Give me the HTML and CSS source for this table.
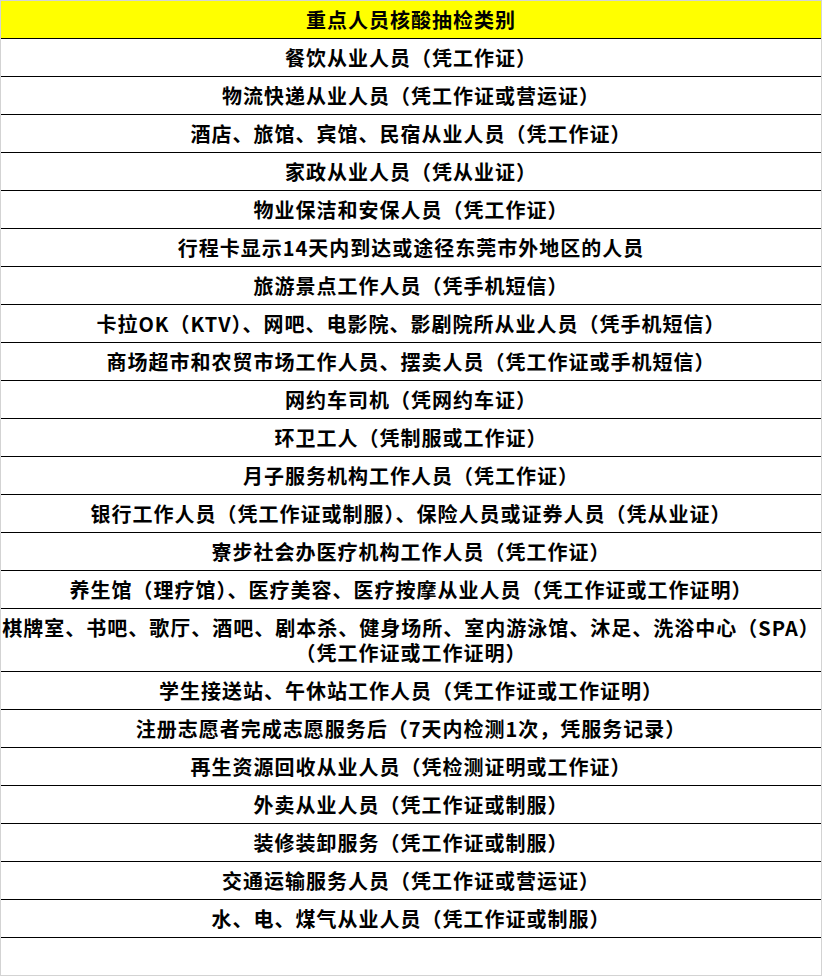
FILE: index.html
```html
<!DOCTYPE html>
<html lang="zh-CN">
<head>
<meta charset="utf-8">
<title>重点人员核酸抽检类别</title>
<link rel="stylesheet" href="styles.css">
</head>
<body>
<div class="frame">
  <div class="sheet">
    <div class="row head">重点人员核酸抽检类别</div>
    <div class="row">餐饮从业人员（凭工作证）</div>
    <div class="row">物流快递从业人员（凭工作证或营运证）</div>
    <div class="row">酒店、旅馆、宾馆、民宿从业人员（凭工作证）</div>
    <div class="row">家政从业人员（凭从业证）</div>
    <div class="row">物业保洁和安保人员（凭工作证）</div>
    <div class="row">行程卡显示14天内到达或途径东莞市外地区的人员</div>
    <div class="row">旅游景点工作人员（凭手机短信）</div>
    <div class="row">卡拉OK（KTV）、网吧、电影院、影剧院所从业人员（凭手机短信）</div>
    <div class="row">商场超市和农贸市场工作人员、摆卖人员（凭工作证或手机短信）</div>
    <div class="row">网约车司机（凭网约车证）</div>
    <div class="row">环卫工人（凭制服或工作证）</div>
    <div class="row">月子服务机构工作人员（凭工作证）</div>
    <div class="row">银行工作人员（凭工作证或制服）、保险人员或证券人员（凭从业证）</div>
    <div class="row">寮步社会办医疗机构工作人员（凭工作证）</div>
    <div class="row">养生馆（理疗馆）、医疗美容、医疗按摩从业人员（凭工作证或工作证明）</div>
    <div class="row tall"><span class="line">棋牌室、书吧、歌厅、酒吧、剧本杀、健身场所、室内游泳馆、沐足、洗浴中心（SPA）</span><span class="line">（凭工作证或工作证明）</span></div>
    <div class="row">学生接送站、午休站工作人员（凭工作证或工作证明）</div>
    <div class="row">注册志愿者完成志愿服务后（7天内检测1次，凭服务记录）</div>
    <div class="row">再生资源回收从业人员（凭检测证明或工作证）</div>
    <div class="row">外卖从业人员（凭工作证或制服）</div>
    <div class="row">装修装卸服务（凭工作证或制服）</div>
    <div class="row">交通运输服务人员（凭工作证或营运证）</div>
    <div class="row">水、电、煤气从业人员（凭工作证或制服）</div>
  </div>
</div>
</body>
</html>
```

FILE: styles.css
```css
html, body {
  margin: 0;
  padding: 0;
  background: #ffffff;
}

.frame {
  width: 822px;
  height: 976px;
  box-sizing: border-box;
  border: 1px solid #d3d3d3;
  background: #ffffff;
  overflow: hidden;
}

.sheet {
  width: 821px;
  margin-right: -1px;
  box-sizing: border-box;
  border-right: 1px solid #000000;
  display: flex;
  flex-direction: column;
}

.row {
  height: 38px;
  box-sizing: border-box;
  border-bottom: 1px solid #000000;
  display: flex;
  align-items: center;
  justify-content: center;
  white-space: nowrap;
  font-family: "Noto Sans CJK SC", "Noto Sans", sans-serif;
  font-weight: 700;
  font-size: 20px;
  letter-spacing: 1px;
  color: #000000;
  line-height: 25px;
}

.head {
  background: #ffff00;
}

.tall {
  height: 63px;
  flex-direction: column;
}

.line {
  display: block;
  text-align: center;
}
```
